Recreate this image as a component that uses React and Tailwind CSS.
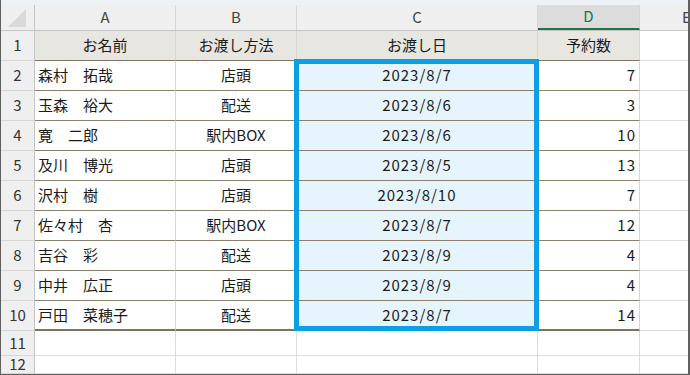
import React from "react";

const rows = [
  ["森村　拓哉", "店頭", "2023/8/7", 7],
  ["玉森　裕大", "配送", "2023/8/6", 3],
  ["寛　二郎", "駅内BOX", "2023/8/6", 10],
  ["及川　博光", "店頭", "2023/8/5", 13],
  ["沢村　樹", "店頭", "2023/8/10", 7],
  ["佐々村　杏", "駅内BOX", "2023/8/7", 12],
  ["吉谷　彩", "配送", "2023/8/9", 4],
  ["中井　広正", "店頭", "2023/8/9", 4],
  ["戸田　菜穂子", "配送", "2023/8/7", 14],
];

const grid = "grid grid-cols-[34px_141px_121px_241px_102px_1fr]";
const jp = { fontFamily: '"Noto Sans CJK JP", "Noto Sans", sans-serif' };

function RowHead({ n, h = "h-[30px]" }) {
  return (
    <div className={`${h} flex items-center justify-center bg-[#efefef] border-r border-r-[#c4c4c4] border-b border-b-[#d6d6d6] text-[15px] text-[#333]`}>
      {n}
    </div>
  );
}

export default function App() {
  return (
    <div className="w-[690px] h-[375px] overflow-hidden bg-white border-l border-r-2 border-b border-[#5f5f5f] relative text-[#1b1b1b]" style={jp}>
      <div className="h-[5px] bg-[#eef2f6]" />

      {/* column letters */}
      <div className={`${grid} h-[26px] bg-[#efefef] border-b border-[#c4c4c4] text-[15px] text-[#444]`}>
        <div className="border-r border-[#c4c4c4] flex items-start justify-center pt-[4px]">
          <svg width="19" height="18" viewBox="0 0 19 18">
            <polygon points="18,0 18,18 0,18" fill="#d9d9d9" />
          </svg>
        </div>
        <div className="border-r border-[#d6d6d6] flex items-center justify-center">A</div>
        <div className="border-r border-[#d6d6d6] flex items-center justify-center">B</div>
        <div className="border-r border-[#d6d6d6] flex items-center justify-center">C</div>
        <div className="border-r border-[#d6d6d6] bg-[#dcdcdc] border-b-2 border-b-[#217346] text-[#217346] flex items-center justify-center">D</div>
        <div className="flex items-center pl-[42px]">E</div>
      </div>

      {/* header row */}
      <div className={`${grid} text-[15px]`}>
        <RowHead n={1} />
        <div className="h-[30px] bg-[#e7e6e1] border-r border-r-[#d6d6d6] border-b border-b-[#7f7260] flex items-center justify-center">お名前</div>
        <div className="h-[30px] bg-[#e7e6e1] border-r border-r-[#d6d6d6] border-b border-b-[#7f7260] flex items-center justify-center">お渡し方法</div>
        <div className="h-[30px] bg-[#e7e6e1] border-r border-r-[#d6d6d6] border-b border-b-[#7f7260] flex items-center justify-center">お渡し日</div>
        <div className="h-[30px] bg-[#e7e6e1] border-r border-r-[#d6d6d6] border-b border-b-[#7f7260] flex items-center justify-center">予約数</div>
        <div className="h-[30px] border-b border-[#dcdcdc]" />
      </div>

      {rows.map((r, i) => {
        const last = i === rows.length - 1;
        const line = last ? "border-b-2 border-b-[#7f7260]" : "border-b border-b-[#8c806c]";
        return (
          <div key={i} className={`${grid} text-[15px]`}>
            <RowHead n={i + 2} />
            <div className={`h-[30px] border-r border-r-[#d6d6d6] ${line} flex items-center pl-[3px]`}>{r[0]}</div>
            <div className={`h-[30px] border-r border-r-[#d6d6d6] ${line} flex items-center justify-center`}>{r[1]}</div>
            <div className={`h-[30px] bg-[#e6f5fd] border-r border-r-[#d6d6d6] ${line} flex items-center justify-center tracking-[1px]`}>{r[2]}</div>
            <div className={`h-[30px] border-r border-r-[#d6d6d6] ${line} flex items-center justify-end pr-[3px] tracking-[1px]`}>{r[3]}</div>
            <div className="h-[30px] border-b border-[#dcdcdc]" />
          </div>
        );
      })}

      {[["h-[25px]", 11], ["h-[18px]", 12]].map(([h, n]) => (
        <div key={n} className={`${grid}`}>
          <RowHead n={n} h={h} />
          <div className={`${h} border-r border-b border-[#dcdcdc]`} />
          <div className={`${h} border-r border-b border-[#dcdcdc]`} />
          <div className={`${h} border-r border-b border-[#dcdcdc]`} />
          <div className={`${h} border-r border-b border-[#dcdcdc]`} />
          <div className={`${h} border-b border-[#dcdcdc]`} />
        </div>
      ))}

      {/* selection C2:C10 */}
      <div className="absolute left-[293px] top-[59px] w-[245px] h-[272px] border-[5px] border-[#0aa1e4] pointer-events-none" />
    </div>
  );
}
